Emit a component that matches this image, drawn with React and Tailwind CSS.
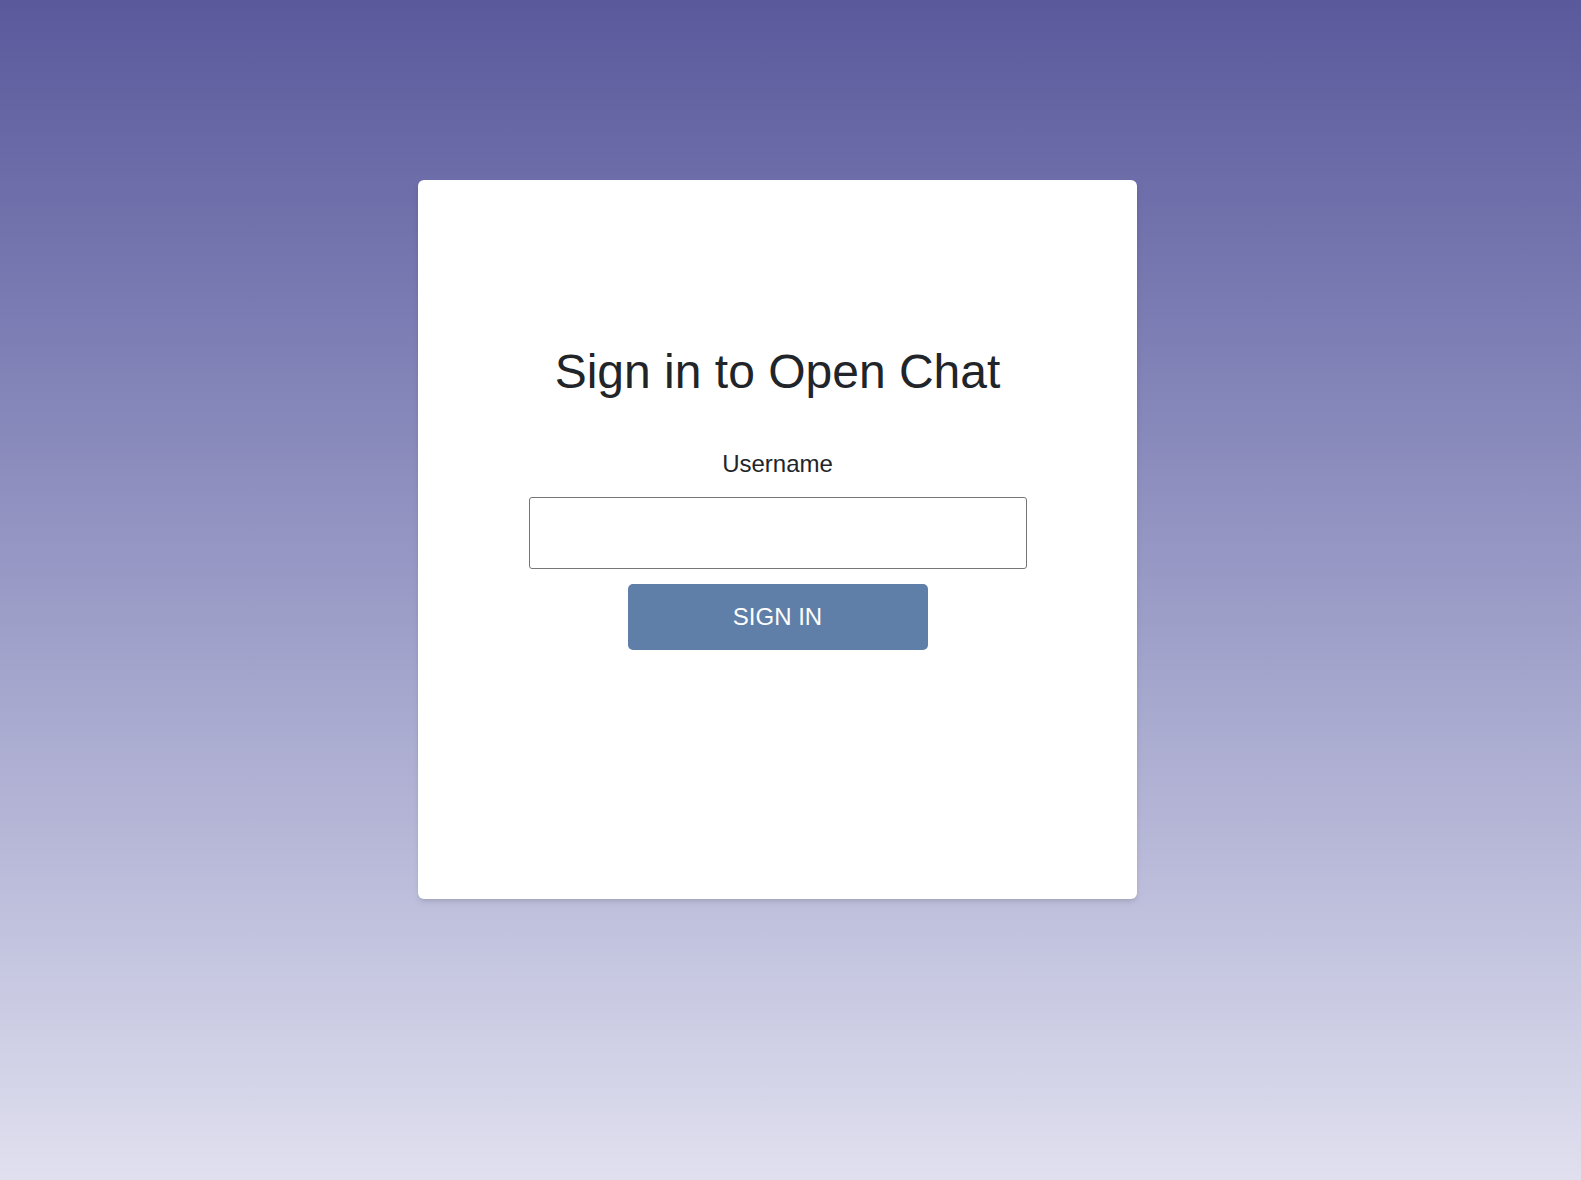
import { useState } from "react";

// ─── Sign-in page ─────────────────────────────────────────────────────────────

function App() {
  const [username, setUsername] = useState("");

  const handleSubmit = (e) => {
    e.preventDefault();
  };

  return (
    <div
      className="min-h-screen flex justify-center pt-[180px] pr-[26px] bg-gradient-to-b from-[#5a599c] to-[#e0e0ef]"
      style={{ fontFamily: '"Liberation Sans", Arial, sans-serif' }}
    >
      <div className="w-[719px] h-[719px] bg-white rounded-md shadow-md flex flex-col items-center pt-[163px] self-start">
        <h1 className="text-[48px] leading-[58px] text-[#212529]">Sign in to Open Chat</h1>

        <form onSubmit={handleSubmit} className="flex flex-col items-center">
          {/* Username */}
          <label htmlFor="username" className="mt-[45px] text-[24px] leading-[35px] text-[#212529]">
            Username
          </label>
          <input
            id="username"
            type="text"
            value={username}
            onChange={(e) => setUsername(e.target.value)}
            className="mt-[16px] w-[498px] h-[72px] border border-[#767676] rounded-[3px] px-3 text-[23px] outline-none"
          />

          {/* Submit */}
          <button
            type="submit"
            className="mt-[15px] w-[300px] h-[66px] bg-[#5f7ea8] text-white text-[24px] rounded-[5px] uppercase"
          >
            Sign in
          </button>
        </form>
      </div>
    </div>
  );
}

export default App;
